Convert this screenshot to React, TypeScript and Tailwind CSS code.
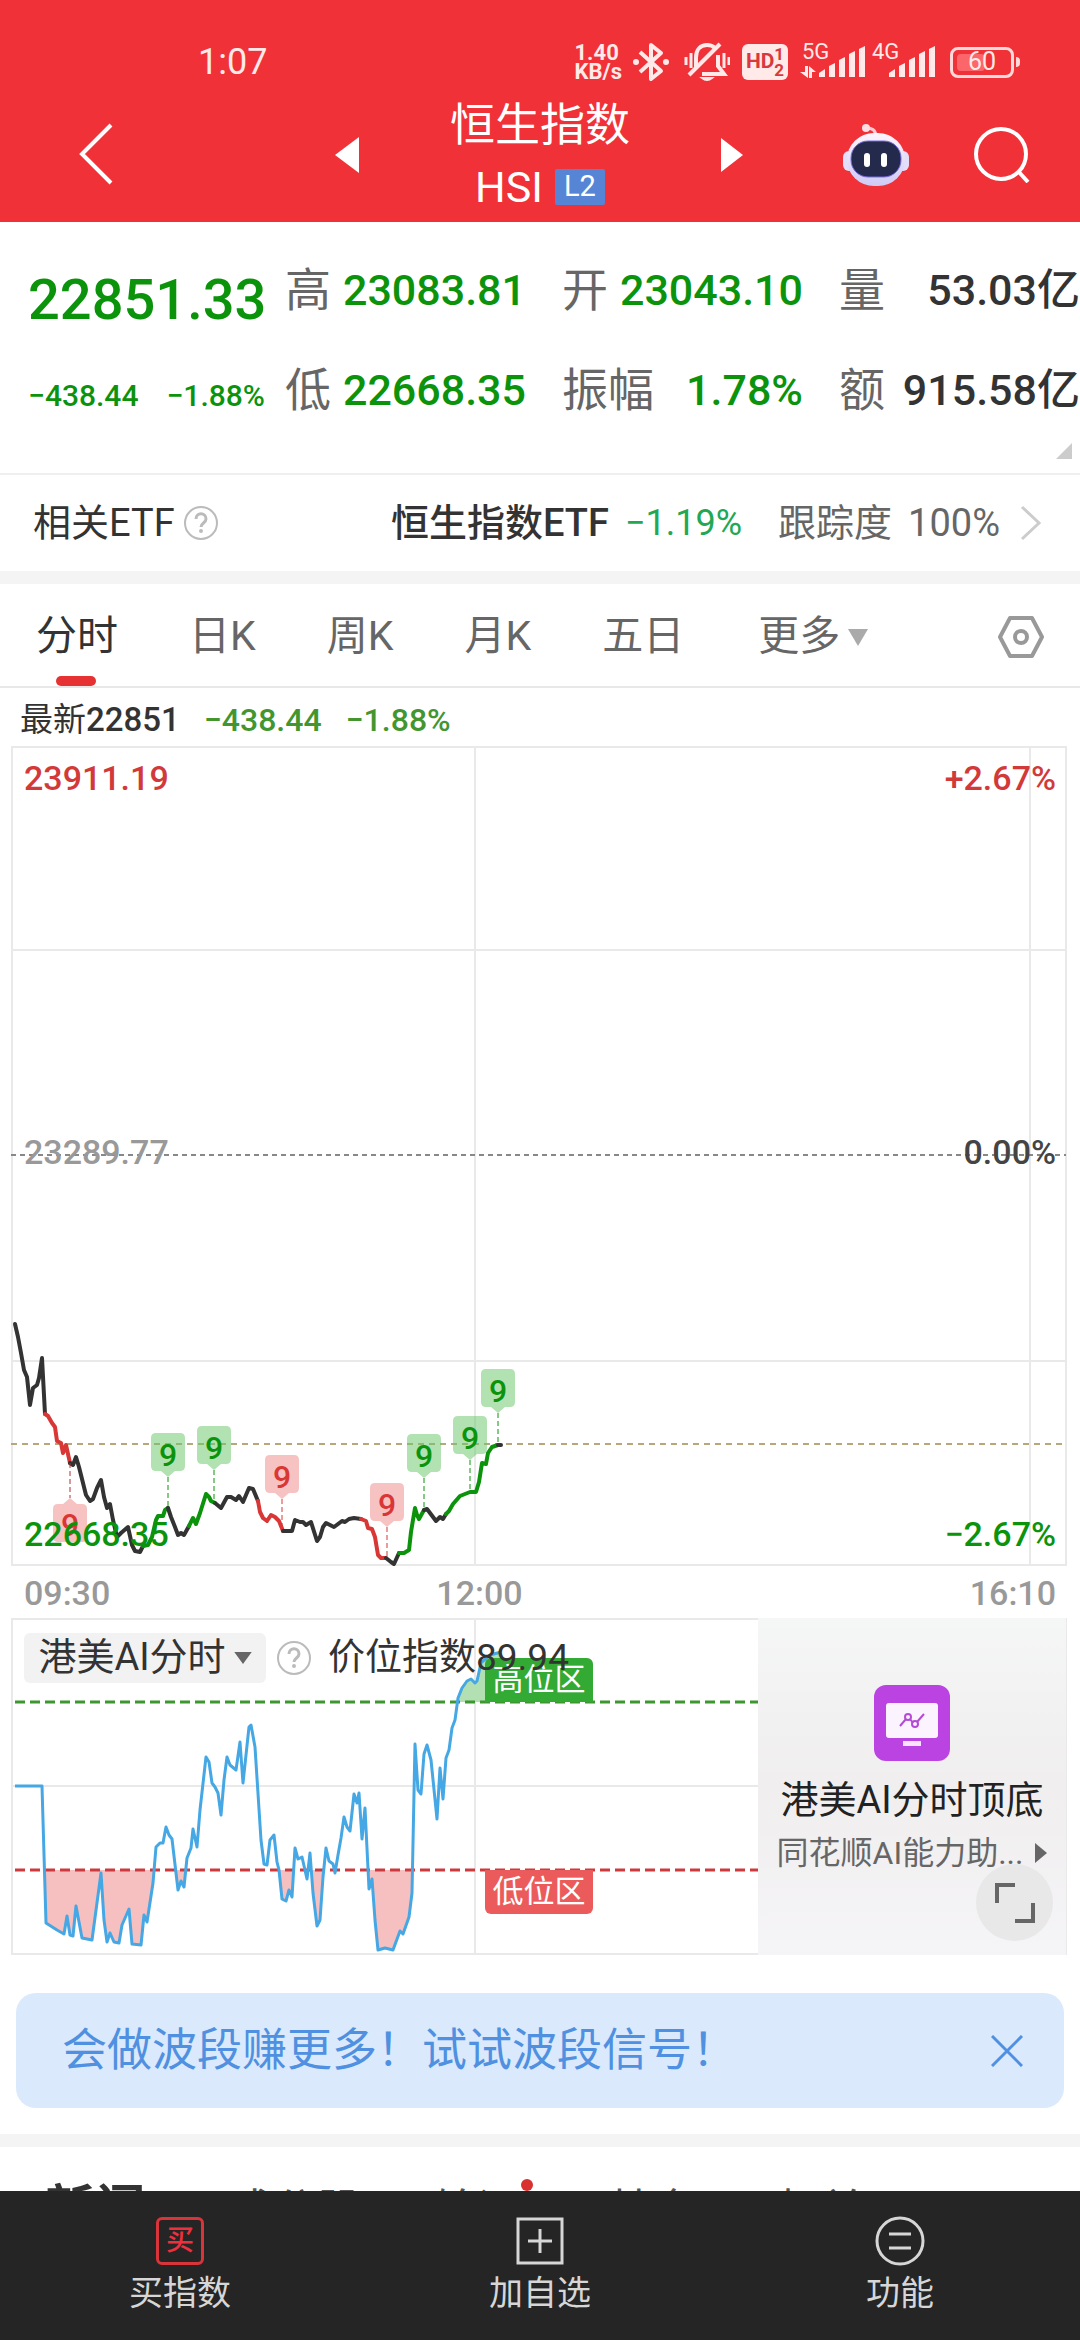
import type { ReactNode } from 'react';

const UP = '#d93636';
const DOWN = '#0c930c';
const INK = '#333333';

const quoteColumns = [
  [
    { label: '高', value: '23083.81', down: true },
    { label: '低', value: '22668.35', down: true },
  ],
  [
    { label: '开', value: '23043.10', down: true },
    { label: '振幅', value: '1.78%', down: true },
  ],
  [
    { label: '量', value: '53.03亿', down: false },
    { label: '额', value: '915.58亿', down: false },
  ],
];

const priceSegments = [
  { color: INK, points: '15,578 18,591 21,607 24,624 27,631 30,659 33,642 37,639 39,632 42,612 45,668' },
  { color: UP, points: '45,668 48,670 52,677 55,681 57,695 61,697 63,707 66,699 70,717' },
  {
    color: INK,
    points:
      '70,717 73,719 76,711 79,721 83,737 86,749 90,755 93,753 97,742 101,734 104,751 107,762 110,758 113,774 117,791 121,787 128,781 132,799 135,805 140,806 143,800',
  },
  { color: DOWN, points: '143,800 148,799 152,791 156,774 158,770 163,770 165,764 168,762' },
  { color: INK, points: '168,762 171,771 175,781 178,789 181,787 184,789 189,780' },
  { color: DOWN, points: '189,780 193,772 196,778 200,767 206,748 209,751 211,755 215,757' },
  { color: INK, points: '215,757 221,762 227,751 231,751 236,754 239,750 243,756 249,742 253,743 258,755' },
  { color: UP, points: '258,755 260,766 263,772 267,775 271,769 275,771 279,775 283,785' },
  {
    color: INK,
    points:
      '283,785 292,785 295,774 300,776 303,776 306,779 311,776 317,795 320,791 323,781 326,777 334,781 342,775 345,776 349,773 354,772 361,773',
  },
  { color: UP, points: '361,773 366,775 368,782 372,783 375,791 378,809 381,812 386,812' },
  { color: INK, points: '386,812 391,816 394,818 399,807' },
  { color: DOWN, points: '399,807 404,807 409,804 411,786 415,762 417,769 419,773 424,764' },
  { color: INK, points: '424,764 427,763 430,767 436,775 440,771 443,773 446,768' },
  {
    color: DOWN,
    points:
      '446,768 449,765 453,758 460,750 465,748 470,746 476,746 479,736 482,717 486,718 488,707 492,701 498,699',
  },
  { color: INK, points: '498,699 501,699' },
];

const signals = [
  { x: 168, top: 687, price: 762, up: false },
  { x: 214, top: 680, price: 757, up: false },
  { x: 282, top: 709, price: 785, up: true },
  { x: 387, top: 737, price: 812, up: true },
  { x: 424, top: 688, price: 762, up: false },
  { x: 470, top: 670, price: 746, up: false },
  { x: 498, top: 623, price: 699, up: false },
];

const indexLine =
  '15,168 42,168 46,305 57,312 64,316 67,298 70,317 73,318 76,288 82,320 92,322 101,255 104,302 107,324 110,315 114,324 119,325 122,307 129,291 132,326 141,327 144,297 147,304 153,265 156,229 160,225 163,225 166,209 169,217 172,221 178,272 181,263 184,269 187,240 191,230 193,211 197,229 200,192 206,139 209,144 212,165 215,169 218,175 221,197 224,162 227,139 230,147 236,152 240,124 243,165 249,109 251,107 255,129 261,222 264,246 267,247 270,222 274,217 277,244 279,252 282,281 286,283 289,272 292,279 295,230 298,241 302,239 307,261 310,235 313,275 317,308 320,302 323,259 326,230 329,243 333,246 335,255 338,237 341,220 344,199 347,209 350,213 354,176 357,185 359,175 362,221 365,190 369,271 372,261 375,302 378,332 385,330 393,332 400,313 403,316 409,299 412,275 415,126 418,172 421,176 424,136 427,127 431,142 437,201 440,150 443,181 446,140 449,132 452,110 455,102 458,80 462,70 467,63 471,61 475,65 477,63 481,45 490,37 501,34';

function SignalBars() {
  return (
    <svg viewBox="0 0 50 32" className="h-8 w-[50px]" fill="#ffe9e9" aria-hidden="true">
      <path d="M1 31V27l6-4v8z" />
      <path d="M11 31V20l6-3v14z" />
      <path d="M21 31V14l6-3v20z" />
      <path d="M31 31V8l6-3v26z" />
      <path d="M41 31V3l6-3v31z" />
    </svg>
  );
}

function StatusBar() {
  return (
    <div className="flex h-[100px] items-center pt-6 pr-[60px] pl-[198px] text-[#ffe9e9]">
      <span className="text-4xl">1:07</span>
      <div className="ml-auto flex items-center">
        <div className="text-[22px] leading-[19px] font-bold">
          1.40
          <br />
          KB/s
        </div>
        <svg viewBox="0 0 38 40" className="ml-2.5 h-10 w-[38px]" fill="none" stroke="currentColor" strokeWidth="4" aria-hidden="true">
          <path d="M8 10l21 19-10 8V3l10 8L8 30" strokeLinejoin="round" />
          <circle cx="4" cy="20" r="2" fill="currentColor" strokeWidth="2" />
          <circle cx="34" cy="20" r="2" fill="currentColor" strokeWidth="2" />
        </svg>
        <svg viewBox="0 0 46 40" className="ml-3.5 h-10 w-[46px]" fill="none" stroke="currentColor" strokeWidth="4" aria-hidden="true">
          <path d="M12 25V16c0-9 5-13 11-13 4 0 6 1 8 3M34 13v11l6 8H18" />
          <path d="M5 33L36 2" />
          <path d="M18 36h10q-5 4-10 0z" fill="currentColor" strokeWidth="2" />
          <path d="M2 15v8M7 11v15M40 11v15M45 15v8" strokeWidth="3" />
        </svg>
        <div className="ml-3 flex h-9 w-[46px] items-center justify-center rounded-md bg-[#ffe9e9] text-[#d8393f]">
          <span className="text-[21px] font-bold">HD</span>
          <span className="text-[17px] leading-4 font-bold">
            1<br />2
          </span>
        </div>
        <div className="relative ml-[30px]">
          <span className="absolute -top-1 -left-4 text-[22px] leading-5">5G</span>
          <svg viewBox="0 0 16 12" className="absolute bottom-0 -left-[18px] h-3 w-4" fill="#ffe9e9" aria-hidden="true">
            <path d="M5 0h3v12L0 6h5zM9 0l7 6h-4v6H9z" />
          </svg>
          <SignalBars />
        </div>
        <div className="relative ml-5">
          <span className="absolute -top-1 -left-4 text-[22px] leading-5">4G</span>
          <SignalBars />
        </div>
        <div className="relative ml-3 flex h-[31px] w-[64px] items-center justify-center rounded-lg border-3 border-[#ffd9da]">
          <span className="absolute inset-y-1 left-1 w-7 rounded-sm bg-[#fb666b]" />
          <span className="relative text-[25px] leading-6">60</span>
        </div>
        <span className="ml-0.5 h-2.5 w-1 rounded-r bg-[#ffd9da]" />
      </div>
    </div>
  );
}

function Robot() {
  return (
    <svg viewBox="0 0 68 62" className="h-[62px] w-[68px]" aria-hidden="true">
      <defs>
        <linearGradient id="shell" x1="0" y1="0" x2="0" y2="1">
          <stop offset="0" stopColor="#fdf5fb" />
          <stop offset="1" stopColor="#cfcaf6" />
        </linearGradient>
      </defs>
      <path d="M23 4q11-1 11 9" fill="none" stroke="#fbc9d3" strokeWidth="3" />
      <circle cx="24" cy="4" r="4" fill="#fbdde3" />
      <rect x="1" y="27" width="12" height="20" rx="6" fill="#e3dffa" />
      <rect x="55" y="27" width="12" height="20" rx="6" fill="#e3dffa" />
      <rect x="5" y="9" width="58" height="53" rx="27" fill="url(#shell)" />
      <rect x="9" y="17" width="50" height="36" rx="17" fill="#232a4c" stroke="#7a6ce0" strokeWidth="1" />
      <rect x="22" y="29" width="6" height="14" rx="3" fill="#fff" />
      <rect x="39" y="29" width="6" height="14" rx="3" fill="#fff" />
    </svg>
  );
}

function Header() {
  return (
    <header className="bg-[#f13138] text-white">
      <StatusBar />
      <div className="grid h-[122px] grid-cols-[1fr_410px_1fr] items-start">
        <button type="button" aria-label="返回" className="ml-[76px] flex h-[108px] w-10 items-center">
          <svg viewBox="0 0 40 62" className="w-10" fill="none" stroke="currentColor" strokeWidth="4">
            <path d="M35 2L6 31l29 29" />
          </svg>
        </button>
        <div className="flex items-start justify-between">
          <button type="button" aria-label="上一个" className="flex h-[110px] items-center">
            <svg viewBox="0 0 24 36" className="h-9 w-6" fill="currentColor">
              <path d="M24 0v36L0 18z" />
            </svg>
          </button>
          <div className="flex flex-col items-center">
            <h1 className="text-[45px] leading-[52px]">恒生指数</h1>
            <div className="flex items-center gap-3">
              <span className="text-[43px] leading-[70px]">HSI</span>
              <span className="flex h-9 w-[50px] items-center justify-center rounded-xs bg-[#5785d6] text-[29px]">L2</span>
            </div>
          </div>
          <button type="button" aria-label="下一个" className="flex h-[110px] items-center">
            <svg viewBox="0 0 24 36" className="h-9 w-6" fill="currentColor">
              <path d="M0 1v34l22-17z" />
            </svg>
          </button>
        </div>
        <div className="flex h-[110px] items-center justify-end gap-16 pr-[50px]">
          <button type="button" aria-label="AI助手">
            <Robot />
          </button>
          <button type="button" aria-label="搜索">
            <svg viewBox="0 0 56 56" className="h-14 w-14" fill="none" stroke="currentColor" strokeWidth="4">
              <circle cx="27" cy="27" r="25" />
              <path d="M44 44l10 11" />
            </svg>
          </button>
        </div>
      </div>
    </header>
  );
}

function Quote() {
  return (
    <section className="relative flex h-[253px] border-b-2 border-[#efefef] pl-7">
      <div className="w-[257px] shrink-0 pt-12 font-medium text-[#0c930c]">
        <div className="text-[56px] leading-[60px]">22851.33</div>
        <div className="mt-9 flex gap-7 text-[30px] leading-[60px] whitespace-nowrap">
          <span>−438.44</span>
          <span>−1.88%</span>
        </div>
      </div>
      <div className="grid flex-1 grid-cols-3 gap-9 pt-[38px]">
        {quoteColumns.map((column) => (
          <dl key={column[0].label} className="flex flex-col gap-10">
            {column.map((item) => (
              <div key={item.label} className="flex justify-between text-[43px] leading-[60px] whitespace-nowrap">
                <dt className="text-[46px] text-[#666]">{item.label}</dt>
                <dd className={item.down ? 'font-medium text-[#0c930c]' : 'font-medium text-[#333]'}>{item.value}</dd>
              </div>
            ))}
          </dl>
        ))}
      </div>
      <svg viewBox="0 0 16 16" className="absolute right-2 bottom-3.5 h-4 w-4" fill="#ccc" aria-hidden="true">
        <path d="M16 0v16H0z" />
      </svg>
    </section>
  );
}

function HelpIcon() {
  return (
    <svg viewBox="0 0 36 36" className="h-9 w-9" fill="none" stroke="#bbb" strokeWidth="2" aria-hidden="true">
      <circle cx="18" cy="18" r="16" />
      <path d="M13 14c0-7 10-7 10 0 0 4-5 4-5 8" strokeWidth="3" />
      <circle cx="18" cy="26" r="1" />
    </svg>
  );
}

function RelatedEtf() {
  return (
    <a href="#etf" className="flex h-24 items-center pr-[38px] pl-[33px] text-[38px] text-[#333]">
      <span>相关ETF</span>
      <span className="ml-2">
        <HelpIcon />
      </span>
      <span className="ml-auto font-medium">恒生指数ETF</span>
      <span className="ml-4 text-[36px] text-[#22a855]">−1.19%</span>
      <span className="ml-9 text-[#666]">跟踪度</span>
      <span className="ml-4 text-[#666]">100%</span>
      <svg viewBox="0 0 22 36" className="ml-5 h-9 w-[22px]" fill="none" stroke="#ccc" strokeWidth="3" aria-hidden="true">
        <path d="M2 2l17 16L2 34" />
      </svg>
    </a>
  );
}

function PeriodTabs() {
  return (
    <nav className="flex h-[104px] items-center border-b-2 border-[#e8e8e8] pt-1 pr-9 pl-9 text-[41px] text-[#666]">
      <button type="button" className="relative h-full text-[#333]">
        <span>分时</span>
        <span className="absolute bottom-0 left-5 h-2.5 w-10 rounded-full bg-[#e63232]" />
      </button>
      <button type="button" className="ml-[71px]">日K</button>
      <button type="button" className="ml-[71px]">周K</button>
      <button type="button" className="ml-[71px]">月K</button>
      <button type="button" className="ml-[71px]">五日</button>
      <button type="button" className="ml-[74px] flex items-center gap-2">
        更多
        <svg viewBox="0 0 20 17" className="h-[17px] w-5" fill="#aaa" aria-hidden="true">
          <path d="M0 0h20L10 17z" />
        </svg>
      </button>
      <button type="button" aria-label="设置" className="ml-auto">
        <svg viewBox="0 0 46 44" className="h-11 w-[46px]" fill="none" stroke="#999" strokeWidth="4" strokeLinejoin="round">
          <path d="M12 3h22l10 19-10 19H12L2 22z" />
          <circle cx="23" cy="22" r="6" />
        </svg>
      </button>
    </nav>
  );
}

function PriceLabel({ className, children }: { className: string; children: ReactNode }) {
  return <span className={`absolute text-[34px] leading-10 font-medium ${className}`}>{children}</span>;
}

function PriceChart() {
  return (
    <section>
      <div className="flex h-[58px] items-center gap-6 pt-1.5 pl-5 text-[32px] font-medium text-[#43962f]">
        <span className="text-[33px] font-normal text-[#333]">
          最新<span className="font-medium">22851</span>
        </span>
        <span>−438.44</span>
        <span>−1.88%</span>
      </div>
      <div className="relative">
        <svg viewBox="0 0 1080 820" className="block w-full" fill="none" aria-hidden="true">
          <g stroke="#e9e9e9" strokeWidth="2">
            <rect x="12" y="1" width="1054" height="818" />
            <path d="M11 204h1055M11 615h1055" />
            <path d="M475 1v818M1030 1v818" />
          </g>
          <path d="M11 409h1055" stroke="#888" strokeWidth="2" strokeDasharray="5 4" />
          <path d="M11 698h1055" stroke="#b9a77c" strokeWidth="2" strokeDasharray="6 5" />
          {priceSegments.map((segment) => (
            <polyline
              key={segment.points}
              points={segment.points}
              stroke={segment.color}
              strokeWidth="4"
              strokeLinejoin="round"
              strokeLinecap="round"
            />
          ))}
          {signals.map(({ x, top, price, up }) => (
            <g key={x} transform={`translate(${x} ${top})`}>
              <path d={`M0 44V${price - top}`} stroke={up ? UP : DOWN} strokeDasharray="5 3" />
              <path
                d="M-12 0h24q5 0 5 5v28q0 5-5 5H7L0 44l-7-6h-5q-5 0-5-5V5q0-5 5-5z"
                fill={up ? '#f08a8a' : '#6cc66c'}
                fillOpacity="0.52"
              />
              <text y="33" textAnchor="middle" fontSize="32" fontWeight="500" fill={up ? UP : DOWN}>
                9
              </text>
            </g>
          ))}
          <g transform="translate(70 752)">
            <path d="M0-35V0" stroke="#a33" strokeDasharray="5 3" />
            <path
              d="M0 0l7 6h5q5 0 5 5v28q0 5-5 5h-24q-5 0-5-5V11q0-5 5-5h5z"
              fill="#f08a8a"
              fillOpacity="0.52"
            />
            <text y="38" textAnchor="middle" fontSize="32" fontWeight="500" fill={UP}>
              9
            </text>
          </g>
        </svg>
        <PriceLabel className="top-3 left-6 text-[#d23a3a]">23911.19</PriceLabel>
        <PriceLabel className="top-3 right-6 text-[#d23a3a]">+2.67%</PriceLabel>
        <PriceLabel className="top-[386px] left-6 text-[#999]">23289.77</PriceLabel>
        <PriceLabel className="top-[386px] right-6 text-[#444]">0.00%</PriceLabel>
        <PriceLabel className="bottom-3 left-6 text-[#0c930c]">22668.35</PriceLabel>
        <PriceLabel className="right-6 bottom-3 text-[#0c930c]">−2.67%</PriceLabel>
      </div>
      <div className="grid h-[52px] grid-cols-[1fr_auto_1fr] items-center pt-0.5 pr-6 pl-6 text-[34px] font-medium text-[#999]">
        <span>09:30</span>
        <span className="mr-[121px]">12:00</span>
        <span className="text-right">16:10</span>
      </div>
    </section>
  );
}

function IndicatorPanel() {
  return (
    <section className="relative">
      <svg viewBox="0 0 1080 337" className="block w-full" fill="none" aria-hidden="true">
        <defs>
          <clipPath id="low-zone">
            <path d="M0 252h1080v85H0z" />
          </clipPath>
          <clipPath id="high-zone">
            <path d="M0 0h1080v84H0z" />
          </clipPath>
        </defs>
        <g stroke="#e9e9e9" strokeWidth="2">
          <rect x="12" y="1" width="1054" height="335" />
          <path d="M11 168h1055M475 1v335" />
        </g>
        <polygon points={`15,252 ${indexLine} 501,252`} fill="#f6bfc0" clipPath="url(#low-zone)" />
        <polygon points={`15,84 ${indexLine} 501,84`} fill="#b2e0b2" clipPath="url(#high-zone)" />
        <path d="M15 84h743" stroke="#3d962f" strokeWidth="3" strokeDasharray="10 5" />
        <path d="M15 252h743" stroke="#cc3a3e" strokeWidth="3" strokeDasharray="10 5" />
        <polyline points={indexLine} stroke="#45a7e3" strokeWidth="3" strokeLinejoin="round" />
      </svg>
      <span className="absolute top-10 left-[485px] flex h-11 w-[108px] items-center justify-center rounded-t-md bg-[#33aa33] text-[31px] text-white">
        高位区
      </span>
      <span className="absolute top-[252px] left-[485px] flex h-11 w-[108px] items-center justify-center rounded-b-md bg-[#ec5b5b] text-[31px] text-white">
        低位区
      </span>
      <div className="absolute top-3 left-6 flex items-center text-[37px] text-[#333]">
        <button type="button" className="flex h-[50px] w-[242px] items-center justify-center gap-2 rounded-md bg-[#f2f2f2] text-[38px]">
          港美AI分时
          <svg viewBox="0 0 16 11" className="h-3 w-[18px]" fill="#666" aria-hidden="true">
            <path d="M0 0h16L8 11z" />
          </svg>
        </button>
        <span className="mr-4 ml-2.5">
          <HelpIcon />
        </span>
        <span>价位指数89.94</span>
      </div>
      <a
        href="#ai"
        className="absolute inset-y-0 right-3.5 flex w-[308px] flex-col items-center bg-linear-to-b from-[#f5f6f6] via-[#f0eeee] to-[#f5f4f7] pt-[67px]"
      >
        <svg viewBox="0 0 76 76" className="h-[76px] w-[76px]" fill="none" aria-hidden="true">
          <rect width="76" height="76" rx="12" fill="#bb43e2" />
          <rect x="12" y="18" width="52" height="35" rx="3" fill="#fbf3fe" />
          <rect x="29" y="56" width="18" height="5" fill="#fbe3ff" />
          <g stroke="#b44bd6" strokeWidth="2">
            <path d="M26 41l6-7M36 34l3 4M43 37l7-8" />
            <circle cx="34" cy="32" r="3" />
            <circle cx="41" cy="39" r="3" />
          </g>
        </svg>
        <span className="mt-3.5 text-[38px] leading-[50px] text-[#222]">港美AI分时顶底</span>
        <span className="mt-2 flex items-center gap-3 text-[32px] leading-10 text-[#666]">
          同花顺AI能力助...
          <svg viewBox="0 0 12 20" className="h-5 w-3" fill="#666" aria-hidden="true">
            <path d="M0 0l12 10L0 20z" />
          </svg>
        </span>
      </a>
      <button
        type="button"
        aria-label="全屏"
        className="absolute right-[27px] bottom-3.5 flex h-[77px] w-[77px] items-center justify-center rounded-full bg-[#e8e8e8]"
      >
        <svg viewBox="0 0 40 40" className="h-10 w-10" fill="none" stroke="#666" strokeWidth="4">
          <path d="M2 20V2h18M38 20v18H20" />
        </svg>
      </button>
    </section>
  );
}

function Banner() {
  return (
    <div className="mx-4 mt-[38px] mb-[26px] flex h-[115px] items-center justify-between rounded-[20px] bg-[#dae9fc] pr-[41px] pl-[46px] text-[45px] text-[#4f90e0]">
      <span>会做波段赚更多！试试波段信号！</span>
      <button type="button" aria-label="关闭">
        <svg viewBox="0 0 32 32" className="h-8 w-8" fill="none" stroke="currentColor" strokeWidth="3">
          <path d="M1 1l30 30M31 1L1 31" />
        </svg>
      </button>
    </div>
  );
}

function NewsTabs() {
  return (
    <nav className="flex items-start pt-7 pl-[45px] text-[44px] leading-[72px] text-[#555]">
      <button type="button" className="text-[50px] leading-[68px] font-bold text-[#333]">新闻</button>
      <button type="button" className="ml-[84px]">成分股</button>
      <button type="button" className="relative ml-[72px]">
        轮证
        <span className="absolute top-1 -right-3 h-3 w-3 rounded-full bg-[#d93030]" />
      </button>
      <button type="button" className="ml-[86px]">基金</button>
      <button type="button" className="ml-[82px]">相关</button>
    </nav>
  );
}

function BottomBar() {
  return (
    <nav className="grid h-[149px] shrink-0 grid-cols-3 bg-[#252525] text-[34px] leading-[50px] text-[#d6d6d6]">
      <button type="button" className="flex flex-col items-center gap-0.5 pt-[25px]">
        <span className="flex h-[50px] items-center">
          <span className="flex h-12 w-12 items-center justify-center rounded-md border-3 border-[#d8343a] text-[28px] font-medium text-[#ee2f3d]">
            买
          </span>
        </span>
        买指数
      </button>
      <button type="button" className="flex flex-col items-center gap-0.5 pt-[25px]">
        <svg viewBox="0 0 50 50" className="h-[50px]" fill="none" stroke="currentColor" strokeWidth="3" aria-hidden="true">
          <path d="M3 3h44v44H3zM25 13v24M13 25h24" />
        </svg>
        加自选
      </button>
      <button type="button" className="flex flex-col items-center gap-0.5 pt-[25px]">
        <svg viewBox="0 0 50 50" className="h-[50px]" fill="none" stroke="currentColor" strokeWidth="3" aria-hidden="true">
          <circle cx="25" cy="25" r="23" />
          <path d="M14 18h22M14 32h22" />
        </svg>
        功能
      </button>
    </nav>
  );
}

export default function App() {
  return (
    <div className="flex h-screen flex-col bg-white font-['Roboto','Noto_Sans_CJK_SC',sans-serif]">
      <main className="min-h-0 flex-1 overflow-hidden">
        <Header />
        <Quote />
        <RelatedEtf />
        <div className="h-[13px] bg-[#f4f4f4]" />
        <PeriodTabs />
        <PriceChart />
        <IndicatorPanel />
        <Banner />
        <div className="h-[13px] bg-[#f4f4f4]" />
        <NewsTabs />
      </main>
      <BottomBar />
    </div>
  );
}
